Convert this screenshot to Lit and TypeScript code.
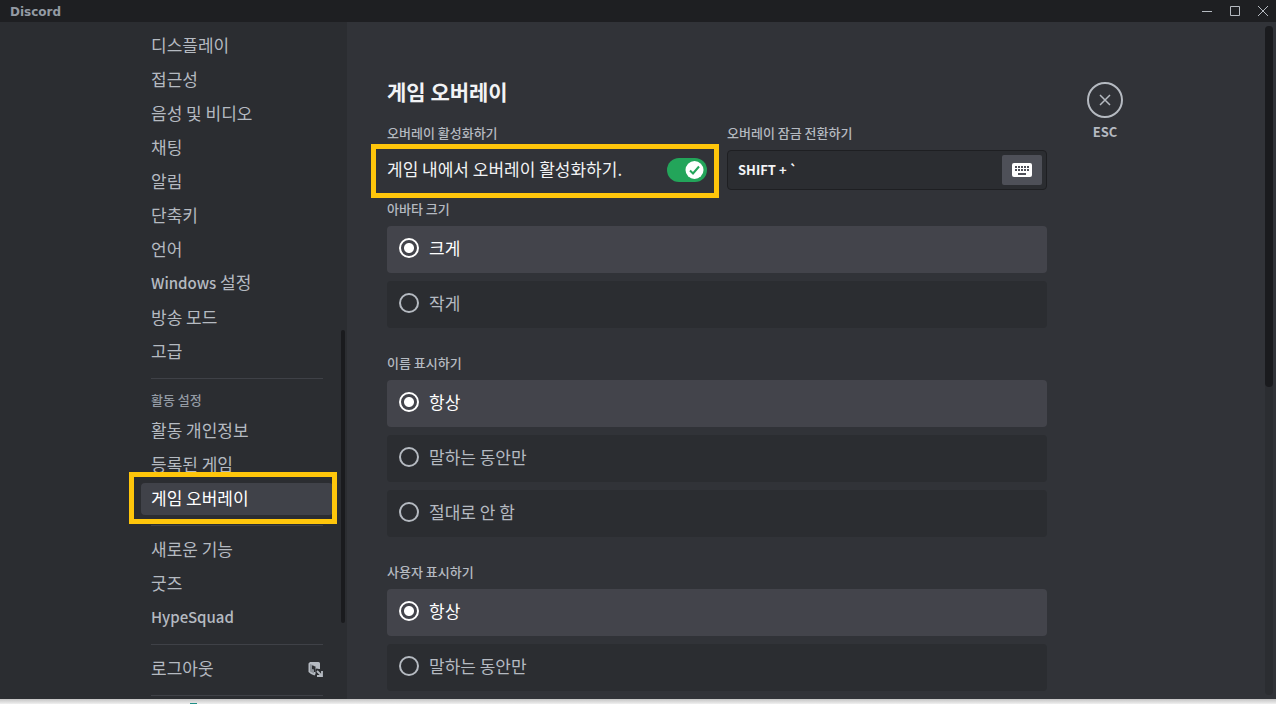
import { LitElement, html, css, svg, nothing } from "lit";
import { customElement, property, state } from "lit/decorators.js";
import { classMap } from "lit/directives/class-map.js";

interface NavItem {
  label: string;
  icon?: boolean;
}

interface NavSection {
  title?: string;
  items: NavItem[];
}

const SECTIONS: NavSection[] = [
  {
    items: [
      { label: "디스플레이" },
      { label: "접근성" },
      { label: "음성 및 비디오" },
      { label: "채팅" },
      { label: "알림" },
      { label: "단축키" },
      { label: "언어" },
      { label: "Windows 설정" },
      { label: "방송 모드" },
      { label: "고급" },
    ],
  },
  {
    title: "활동 설정",
    items: [{ label: "활동 개인정보" }, { label: "등록된 게임" }, { label: "게임 오버레이" }],
  },
  { items: [{ label: "새로운 기능" }, { label: "굿즈" }, { label: "HypeSquad" }] },
  { items: [{ label: "로그아웃", icon: true }] },
];

/** Latin words are set slightly smaller than the Hangul around them. */
const mixed = (text: string) =>
  text
    .split(/([A-Za-z]+)/)
    .filter((part) => part !== "")
    .map((part) => (/^[A-Za-z]/.test(part) ? html`<span class="latin">${part}</span>` : part));

const logoutIcon = svg`
  <path fill="#b5bac1" d="M3 1h8.500A1.500 1.500 0 0 1 13 2.500V8h-1l-2.500-.5-1 1V13l-1 1.500L4 13 1.500 11V2.500z"/>
  <path fill="#8b9097" d="M3 3l4 1.500v8L3 10.500z"/>
  <path fill="#2b2d31" d="M5 4.500l3.500 1v5.500L7 11V8.500L5 8z"/>
  <path stroke="#b5bac1" stroke-width="1.800" fill="none" d="M10 10l4.500 4.500M15 10v5h-5"/>`;

/** Title strip with the product name and window buttons. */
@customElement("title-bar")
export class TitleBar extends LitElement {
  static styles = css`
    :host {
      display: flex;
      justify-content: space-between;
      height: 22px;
      background: #1e1f22;
      color: #949ba4;
    }
    .name {
      padding-left: 10px;
      font: bold 12px/24px "DejaVu Sans", sans-serif;
    }
    .buttons {
      display: flex;
    }
    .button {
      width: 28px;
      height: 22px;
      padding: 0;
      border: 0;
      background: none;
      color: #b5bac1;
    }
    .glyph {
      display: block;
      margin: 0 auto;
    }
  `;

  private button(name: string, path: string) {
    return html`<button class="button" aria-label=${name}>
      <svg class="glyph" width="14" height="22" viewBox="0 0 14 22" fill="none" stroke="currentColor">
        <path d=${path} />
      </svg>
    </button>`;
  }

  render() {
    return html`
      <span class="name">Discord</span>
      <div class="buttons">
        ${this.button("최소화", "M3 11.500H13")} ${this.button("최대화", "M3.500 6.500h9v9h-9z")}
        ${this.button("닫기", "M3 6l10 10M13 6L3 16")}
      </div>
    `;
  }
}

/** Left-hand list of settings pages. */
@customElement("settings-nav")
export class SettingsNav extends LitElement {
  @state() private current = "게임 오버레이";

  static styles = css`
    :host {
      position: relative;
      display: flex;
      justify-content: flex-end;
      overflow: hidden;
      background: #2b2d31;
    }
    .list {
      box-sizing: border-box;
      width: 218px;
      padding: 8px 14px 0 12px;
    }
    .section {
      display: flow-root;
    }
    .section + .section::before {
      content: "";
      display: block;
      height: 1px;
      margin: 8px 10px;
      background: #3f4147;
    }
    .heading {
      margin: 0;
      padding: 5px 10px 7px;
      font-size: 13px;
      font-weight: 500;
      line-height: 16px;
      color: #949ba4;
    }
    .item {
      position: relative;
      display: flex;
      align-items: center;
      justify-content: space-between;
      height: 32px;
      margin-bottom: 2px;
      padding: 0 10px;
      border-radius: 4px;
      font-size: 17px;
      line-height: 20px;
      color: #b5bac1;
      text-decoration: none;
      white-space: nowrap;
    }
    .label {
      padding-bottom: 3px;
    }
    .latin {
      font-size: 15px;
      font-weight: 500;
    }
    .current {
      background: #404249;
      color: #fff;
    }
    .current::after {
      content: "";
      position: absolute;
      inset: -11px -4px -9px -12px;
      border: 5px solid #ffc60b;
      z-index: 1;
    }
    .thumb {
      position: absolute;
      top: 308px;
      right: 2px;
      width: 4px;
      height: 293px;
      border-radius: 2px;
      background: #1a1b1e;
    }
  `;

  private select(event: Event, label: string) {
    event.preventDefault();
    this.current = label;
  }

  render() {
    return html`
      <nav class="list" aria-label="설정">
        ${SECTIONS.map(
          (section) => html`<div class="section">
            ${section.title ? html`<h2 class="heading">${section.title}</h2>` : nothing}
            ${section.items.map(
              (item) => html`<a
                href="#"
                class=${classMap({ item: true, current: item.label === this.current })}
                @click=${(e: Event) => this.select(e, item.label)}
                ><span class="label">${mixed(item.label)}</span>${item.icon
                  ? html`<svg width="16" height="16" viewBox="0 0 16 16" aria-hidden="true">${logoutIcon}</svg>`
                  : nothing}</a
              >`
            )}
          </div>`
        )}
        <div class="section"></div>
      </nav>
      <div class="thumb"></div>
    `;
  }
}

/** A titled group of full-width radio cards. */
@customElement("radio-cards")
export class RadioCards extends LitElement {
  @property() heading = "";
  @property({ type: Array }) options: string[] = [];
  @state() private selected = 0;

  static styles = css`
    :host {
      display: block;
    }
    .group {
      display: flex;
      flex-direction: column;
      gap: 8px;
      margin: 0;
      padding: 0;
      border: 0;
      min-width: 0;
    }
    .heading {
      padding: 0;
      margin-bottom: 9px;
      font-size: 13px;
      font-weight: 500;
      line-height: 16px;
      color: #b5bac1;
    }
    .card {
      display: flex;
      align-items: center;
      gap: 10px;
      box-sizing: border-box;
      height: 47px;
      padding: 0 12px 3px;
      border-radius: 4px;
      background: #2b2d31;
      color: #b5bac1;
      font-size: 17px;
      line-height: 20px;
    }
    .selected {
      background: #43444b;
      color: #fff;
    }
    .dot {
      appearance: none;
      flex: none;
      width: 20px;
      height: 20px;
      margin: 0;
      border: 2px solid currentColor;
      border-radius: 50%;
      color: inherit;
    }
    .dot:checked {
      background: radial-gradient(circle, currentColor 4.5px, transparent 5.5px);
    }
  `;

  render() {
    return html`<fieldset class="group">
      <legend class="heading">${this.heading}</legend>
      ${this.options.map(
        (option, i) => html`<label class=${classMap({ card: true, selected: i === this.selected })}>
          <input
            class="dot"
            type="radio"
            name="choice"
            .checked=${i === this.selected}
            @change=${() => (this.selected = i)}
          />
          <span>${option}</span>
        </label>`
      )}
    </fieldset>`;
  }
}

/** The game overlay settings page. */
@customElement("overlay-page")
export class OverlayPage extends LitElement {
  static styles = css`
    :host {
      position: relative;
      display: flex;
      align-items: flex-start;
      overflow: hidden;
      background: #313338;
      color: #b5bac1;
    }
    .page {
      box-sizing: border-box;
      flex: 1 1 auto;
      min-width: 460px;
      max-width: 740px;
      padding: 59px 40px 0;
    }
    .title {
      margin: 0 0 24px;
      font-size: 21px;
      font-weight: 700;
      line-height: 20px;
      color: #f2f3f5;
    }
    .fields {
      display: grid;
      grid-template-columns: repeat(2, minmax(0, 1fr));
      gap: 20px;
      margin-bottom: 11px;
    }
    .heading {
      display: block;
      margin: 0 0 9px;
      font-size: 13px;
      font-weight: 500;
      line-height: 16px;
    }
    .toggle-row {
      position: relative;
      display: flex;
      align-items: center;
      justify-content: space-between;
      height: 40px;
      color: #f2f3f5;
      font-size: 17px;
      line-height: 20px;
    }
    .toggle-row::after {
      content: "";
      position: absolute;
      inset: -6px -12px -8px -16px;
      border: 5px solid #ffc60b;
      pointer-events: none;
    }
    .toggle-label {
      padding-bottom: 3px;
    }
    .switch {
      appearance: none;
      width: 40px;
      height: 24px;
      margin: 0;
      border-radius: 12px;
      background: #80848e;
    }
    .switch:checked {
      background: #23a55a;
    }
    .switch-wrap {
      position: relative;
      display: flex;
    }
    .knob {
      position: absolute;
      top: 3px;
      left: 3px;
      pointer-events: none;
    }
    .switch:checked + .knob {
      left: 18px;
    }
    .keybind {
      display: flex;
      align-items: center;
      box-sizing: border-box;
      height: 40px;
      padding: 0 4px 0 10px;
      border: 1px solid #1e1f22;
      border-radius: 4px;
      background: #2b2d31;
    }
    .keys {
      flex: 1;
      min-width: 0;
      padding: 0;
      border: 0;
      outline: 0;
      background: none;
      color: #f2f3f5;
      font: bold 13px/20px "Noto Sans CJK KR", sans-serif;
    }
    .record {
      display: grid;
      place-items: center;
      width: 40px;
      height: 30px;
      padding: 0;
      border: 0;
      border-radius: 2px;
      background: #4e5058;
    }
    .groups {
      display: grid;
      gap: 27px;
    }
    .tools {
      flex: none;
      padding-top: 60px;
      text-align: center;
    }
    .close {
      display: block;
      width: 36px;
      padding: 0;
      border: 0;
      background: none;
      color: #b5bac1;
      font: bold 13px/28px "Noto Sans CJK KR", sans-serif;
    }
    .ring {
      display: block;
    }
    .track {
      position: absolute;
      top: 4px;
      right: 3px;
      bottom: 4px;
      width: 8px;
      border-radius: 4px;
      background: #2b2d31;
    }
    .thumb {
      height: 54%;
      border-radius: 4px;
      background: #1a1b1e;
    }
  `;

  render() {
    const keys: number[][] = [];
    for (let row = 0; row < 2; row++) {
      for (let col = 0; col < 5; col++) keys.push([3 + col * 3, 3 + row * 3]);
    }
    return html`
      <main class="page">
        <h1 class="title">게임 오버레이</h1>
        <div class="fields">
          <div>
            <h2 class="heading">오버레이 활성화하기</h2>
            <div class="toggle-row">
              <label class="toggle-label" for="enable">게임 내에서 오버레이 활성화하기.</label>
              <span class="switch-wrap">
                <input id="enable" class="switch" type="checkbox" role="switch" checked />
                <svg class="knob" width="19" height="18" viewBox="0 0 19 18" aria-hidden="true">
                  <circle cx="9.500" cy="9" r="9" fill="#fff" />
                  <path d="M5 9.500l3 3 6-7" fill="none" stroke="#23a55a" stroke-width="2" />
                </svg>
              </span>
            </div>
          </div>
          <div>
            <label class="heading" for="keys">오버레이 잠금 전환하기</label>
            <div class="keybind">
              <input id="keys" class="keys" type="text" readonly value="SHIFT + \`" />
              <button class="record" aria-label="단축키 편집">
                <svg width="20" height="14" viewBox="0 0 20 14">
                  <rect width="20" height="14" rx="2" fill="#fff" />
                  ${keys.map(([x, y]) => svg`<rect x=${x} y=${y} width="2" height="2" fill="#4e5058"/>`)}
                  <rect x="6" y="10" width="8" height="2" fill="#4e5058" />
                </svg>
              </button>
            </div>
          </div>
        </div>
        <div class="groups">
          <radio-cards heading="아바타 크기" .options=${["크게", "작게"]}></radio-cards>
          <radio-cards heading="이름 표시하기" .options=${["항상", "말하는 동안만", "절대로 안 함"]}></radio-cards>
          <radio-cards heading="사용자 표시하기" .options=${["항상", "말하는 동안만"]}></radio-cards>
        </div>
      </main>
      <div class="tools">
        <button class="close">
          <svg class="ring" width="36" height="36" viewBox="0 0 36 36" fill="none" stroke="currentColor" aria-hidden="true">
            <circle cx="18" cy="18" r="17" stroke-width="2" />
            <path d="M13 13l10 10M23 13L13 23" stroke-width="1.500" />
          </svg>
          ESC
        </button>
      </div>
      <div class="track"><div class="thumb"></div></div>
    `;
  }
}

@customElement("app-root")
export class AppRoot extends LitElement {
  static styles = css`
    :host {
      display: grid;
      grid-template-rows: auto minmax(0, 1fr) 5px;
      height: 100vh;
      overflow: hidden;
      font-family: "Noto Sans CJK KR", sans-serif;
    }
    .body {
      display: flex;
      min-height: 0;
    }
    .side {
      flex: 1 0 218px;
    }
    .content {
      flex: 1 1 800px;
    }
    .edge {
      display: flow-root;
      background: linear-gradient(#c4c4c4, #f0f0f0);
    }
    .speck {
      width: 7px;
      height: 1px;
      margin: 4px 0 0 190px;
      background: #1f8f86;
    }
  `;

  render() {
    return html`
      <title-bar></title-bar>
      <div class="body">
        <settings-nav class="side"></settings-nav>
        <overlay-page class="content"></overlay-page>
      </div>
      <div class="edge"><div class="speck"></div></div>
    `;
  }
}
